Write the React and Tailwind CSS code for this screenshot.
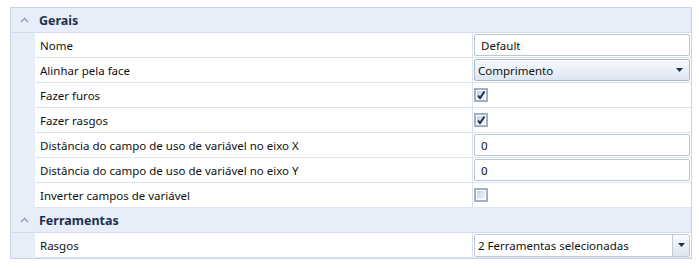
import React from "react";

const Chevron = () => (
  <svg width="9" height="6" viewBox="0 0 9 6" className="block">
    <path d="M1 5 L4.5 1.5 L8 5" fill="none" stroke="#8a9bb3" strokeWidth="1.3" />
  </svg>
);

const Arrow = () => (
  <svg width="7" height="4" viewBox="0 0 7 4" className="block">
    <path d="M0 0 H7 L3.5 4 Z" fill="#1e2f48" />
  </svg>
);

const Check = ({ checked }) => (
  <div className="w-[14px] h-[14px] border-2 border-[#a3b0c4] p-[1px] bg-white">
    <div className="w-full h-full bg-gradient-to-br from-[#c5d0e0] to-[#f4f7fb] relative">
      {checked && (
        <svg width="10" height="10" viewBox="0 0 10 10" className="absolute -left-[1px] -top-[1px]">
          <path d="M2 5.5 L4 8 L8.5 1.5" fill="none" stroke="#1b3355" strokeWidth="2" />
        </svg>
      )}
    </div>
  </div>
);

const Header = ({ label }) => (
  <div className="flex h-[25px] bg-[#e8eef9] border-b border-[#d2dcec]">
    <div className="w-[24px] flex items-center justify-center pl-[2px]">
      <Chevron />
    </div>
    <div className="flex items-center font-bold text-[#1e3050] text-[12.5px] pl-[4px] pt-[2px]">{label}</div>
  </div>
);

const Row = ({ label, children }) => (
  <div className="flex h-[25px]">
    <div className="w-[24px] bg-[#e8eef9]" />
    <div className="flex flex-1 border-b border-[#dbe3ef] bg-white">
      <div className="w-[438px] flex items-center pl-[5px] pt-[2px] border-r border-[#dbe3ef] text-[#111]">{label}</div>
      <div className="flex-1 flex items-center pl-[1px] pr-[1px]">{children}</div>
    </div>
  </div>
);

const TextBox = ({ value }) => (
  <div className="h-[22px] w-full border border-[#b9c6d8] rounded-[2px] flex items-center pl-[6px] pt-[1px] bg-white text-[#111]">
    {value}
  </div>
);

export default function App() {
  return (
    <div
      className="w-[699px] h-[268px] bg-white pt-[7px] pl-[10px]"
      style={{ fontFamily: "'Noto Sans', 'Open Sans', sans-serif", fontSize: "11.5px" }}
    >
      <div className="w-[682px] border border-[#c7d3e4] flex flex-col">
        <Header label="Gerais" />
        <Row label="Nome">
          <TextBox value="Default" />
        </Row>
        <Row label="Alinhar pela face">
          <div className="h-[22px] w-full border border-[#a9b8cd] rounded-[2px] flex items-center justify-between pl-[3px] pr-[6px] bg-gradient-to-b from-[#f8fafd] to-[#dce6f2] text-[#111]">
            <span className="pt-[1px]">Comprimento</span>
            <Arrow />
          </div>
        </Row>
        <Row label="Fazer furos">
          <Check checked />
        </Row>
        <Row label="Fazer rasgos">
          <Check checked />
        </Row>
        <Row label="Distância do campo de uso de variável no eixo X">
          <TextBox value="0" />
        </Row>
        <Row label="Distância do campo de uso de variável no eixo Y">
          <TextBox value="0" />
        </Row>
        <Row label="Inverter campos de variável">
          <Check />
        </Row>
        <Header label="Ferramentas" />
        <Row label="Rasgos">
          <div className="h-[23px] w-full border border-[#c0ccdc] rounded-[2px] flex bg-white text-[#111]">
            <div className="flex-1 flex items-center pl-[3px] pt-[1px]">2 Ferramentas selecionadas</div>
            <div className="w-[17px] border-l border-[#c0ccdc] bg-gradient-to-b from-[#f8fafd] to-[#dce6f2] flex items-center justify-center">
              <Arrow />
            </div>
          </div>
        </Row>
      </div>
    </div>
  );
}
